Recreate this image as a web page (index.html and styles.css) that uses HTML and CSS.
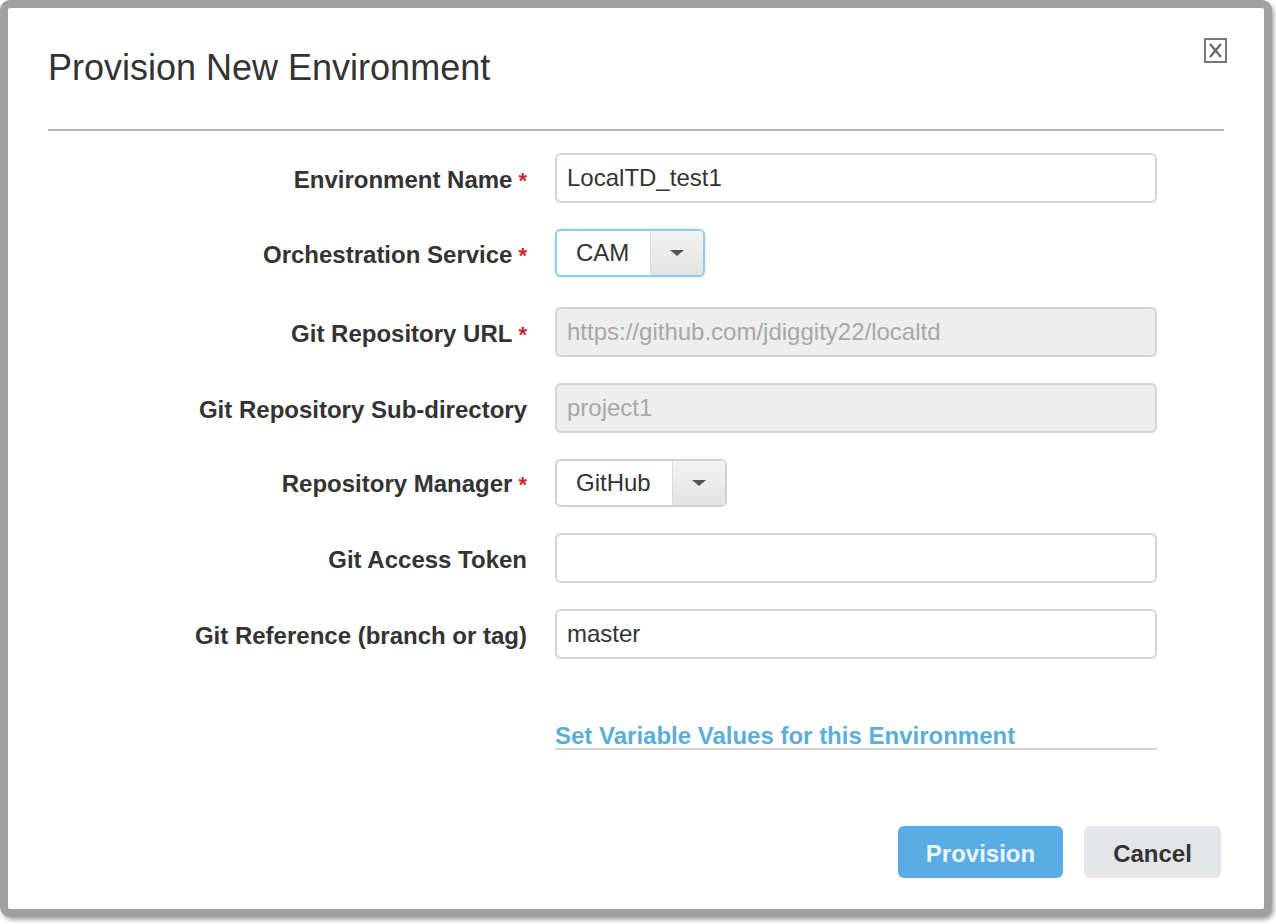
FILE: index.html
```html
<!DOCTYPE html>
<html>
<head>
<meta charset="utf-8">
<link rel="stylesheet" href="styles.css">
</head>
<body>
<div class="dialog">
  <div class="header">
    <h1 class="title">Provision New Environment</h1>
    <button class="close" aria-label="Close">
      <svg width="24" height="26" viewBox="0 0 24 26">
        <rect x="1" y="1" width="21" height="23" fill="none" stroke="#777" stroke-width="2"/>
        <path d="M6 6 L17 19 M17 6 L6 19" stroke="#666" stroke-width="2.2" fill="none"/>
      </svg>
    </button>
  </div>
  <div class="form">
    <label class="lbl">Environment Name<span class="req">*</span></label>
    <div class="field"><input class="input" type="text" value="LocalTD_test1"></div>

    <label class="lbl tall">Orchestration Service<span class="req">*</span></label>
    <div class="field tall"><div class="select focus"><span class="sel-text">CAM</span><span class="sel-arrow"><span class="caret"></span></span></div></div>

    <label class="lbl">Git Repository URL<span class="req">*</span></label>
    <div class="field"><input class="input disabled" type="text" value="https://github.com/jdiggity22/localtd" disabled></div>

    <label class="lbl">Git Repository Sub-directory</label>
    <div class="field"><input class="input disabled" type="text" value="project1" disabled></div>

    <label class="lbl short">Repository Manager<span class="req">*</span></label>
    <div class="field short"><div class="select"><span class="sel-text">GitHub</span><span class="sel-arrow"><span class="caret"></span></span></div></div>

    <label class="lbl">Git Access Token</label>
    <div class="field"><input class="input" type="text" value=""></div>

    <label class="lbl">Git Reference (branch or tag)</label>
    <div class="field"><input class="input" type="text" value="master"></div>

    <div></div>
    <div class="link-row"><a class="link" href="#">Set Variable Values for this Environment</a></div>
  </div>
  <div class="footer">
    <button class="btn primary">Provision</button>
    <button class="btn secondary">Cancel</button>
  </div>
</div>
</body>
</html>
```

FILE: styles.css
```css
* { box-sizing: border-box; }
html, body { margin: 0; padding: 0; background: #ffffff; }
body {
  font-family: "Liberation Sans", Arial, sans-serif;
  color: #333333;
  width: 1276px;
  height: 924px;
  overflow: hidden;
}
.dialog {
  width: 1272px;
  height: 917px;
  border: 8px solid #a0a0a0;
  border-radius: 10px;
  background: #ffffff;
  box-shadow: 2px 3px 4px rgba(0, 0, 0, 0.35);
  padding: 40px 40px 0 40px;
  display: flex;
  flex-direction: column;
}
.header {
  display: flex;
  justify-content: space-between;
  align-items: flex-start;
  border-bottom: 2px solid #b4b4b4;
  padding-bottom: 41px;
}
.title {
  margin: 0;
  font-size: 36px;
  line-height: 40px;
  font-weight: normal;
  color: #333333;
}
.close {
  border: none;
  background: none;
  padding: 0;
  margin: -10px -4px 0 0;
  cursor: pointer;
  line-height: 0;
}
.form {
  display: grid;
  grid-template-columns: 479px 602px;
  column-gap: 28px;
  row-gap: 26px;
  margin-top: 22px;
}
.lbl {
  font-size: 24px;
  font-weight: bold;
  text-align: right;
  color: #333333;
  height: 50px;
  line-height: 53px;
  white-space: nowrap;
}
.lbl.tall { height: 52px; line-height: 51px; }
.lbl.short { height: 48px; line-height: 50px; }
.req {
  color: #d0262b;
  margin-left: 6px;
  font-size: 22px;
}
.field {
  height: 50px;
  display: flex;
  align-items: flex-start;
}
.field.tall { height: 52px; }
.field.short { height: 48px; }
.input {
  width: 602px;
  height: 50px;
  border: 2px solid #d4d4d4;
  border-radius: 6px;
  padding: 0 10px;
  font-family: "Liberation Sans", Arial, sans-serif;
  font-size: 24px;
  color: #333333;
  background: #ffffff;
  outline: none;
}
.input.disabled {
  background: #eeeeee;
  color: #a8a8a8;
  -webkit-text-fill-color: #a8a8a8;
  opacity: 1;
}
.select {
  display: flex;
  height: 48px;
  border: 2px solid #d0d0d0;
  border-radius: 6px;
  overflow: hidden;
  background: #ffffff;
}
.select.focus {
  border-color: #8ecdf0;
  box-shadow: 0 0 2px rgba(102, 175, 233, 0.5);
}
.sel-text {
  font-size: 24px;
  line-height: 44px;
  padding: 0 21px 0 19px;
  color: #333333;
}
.sel-arrow {
  width: 53px;
  display: flex;
  align-items: center;
  justify-content: center;
  background: linear-gradient(#f4f4f4, #e2e2e2);
  border-left: 1px solid #dcdcdc;
}
.caret {
  width: 0;
  height: 0;
  border-left: 7px solid transparent;
  border-right: 7px solid transparent;
  border-top: 6px solid #555555;
}
.link-row {
  margin-top: 36px;
  border-bottom: 2px solid #d2d2d2;
  height: 29px;
}
.link {
  font-size: 24px;
  font-weight: bold;
  color: #5aaed8;
  text-decoration: none;
  line-height: 29px;
  display: inline-block;
}
.footer {
  margin-top: auto;
  margin-bottom: 31px;
  margin-right: 3px;
  display: flex;
  justify-content: flex-end;
  gap: 21px;
}
.btn {
  height: 52px;
  border: none;
  border-radius: 6px;
  font-family: "Liberation Sans", Arial, sans-serif;
  font-size: 24px;
  font-weight: bold;
  padding: 3px 0 0 0;
  cursor: pointer;
}
.btn.primary {
  width: 165px;
  background: #5aace4;
  color: #eaf5fc;
}
.btn.secondary {
  width: 137px;
  background: #e3e5e8;
  color: #333333;
}
```
